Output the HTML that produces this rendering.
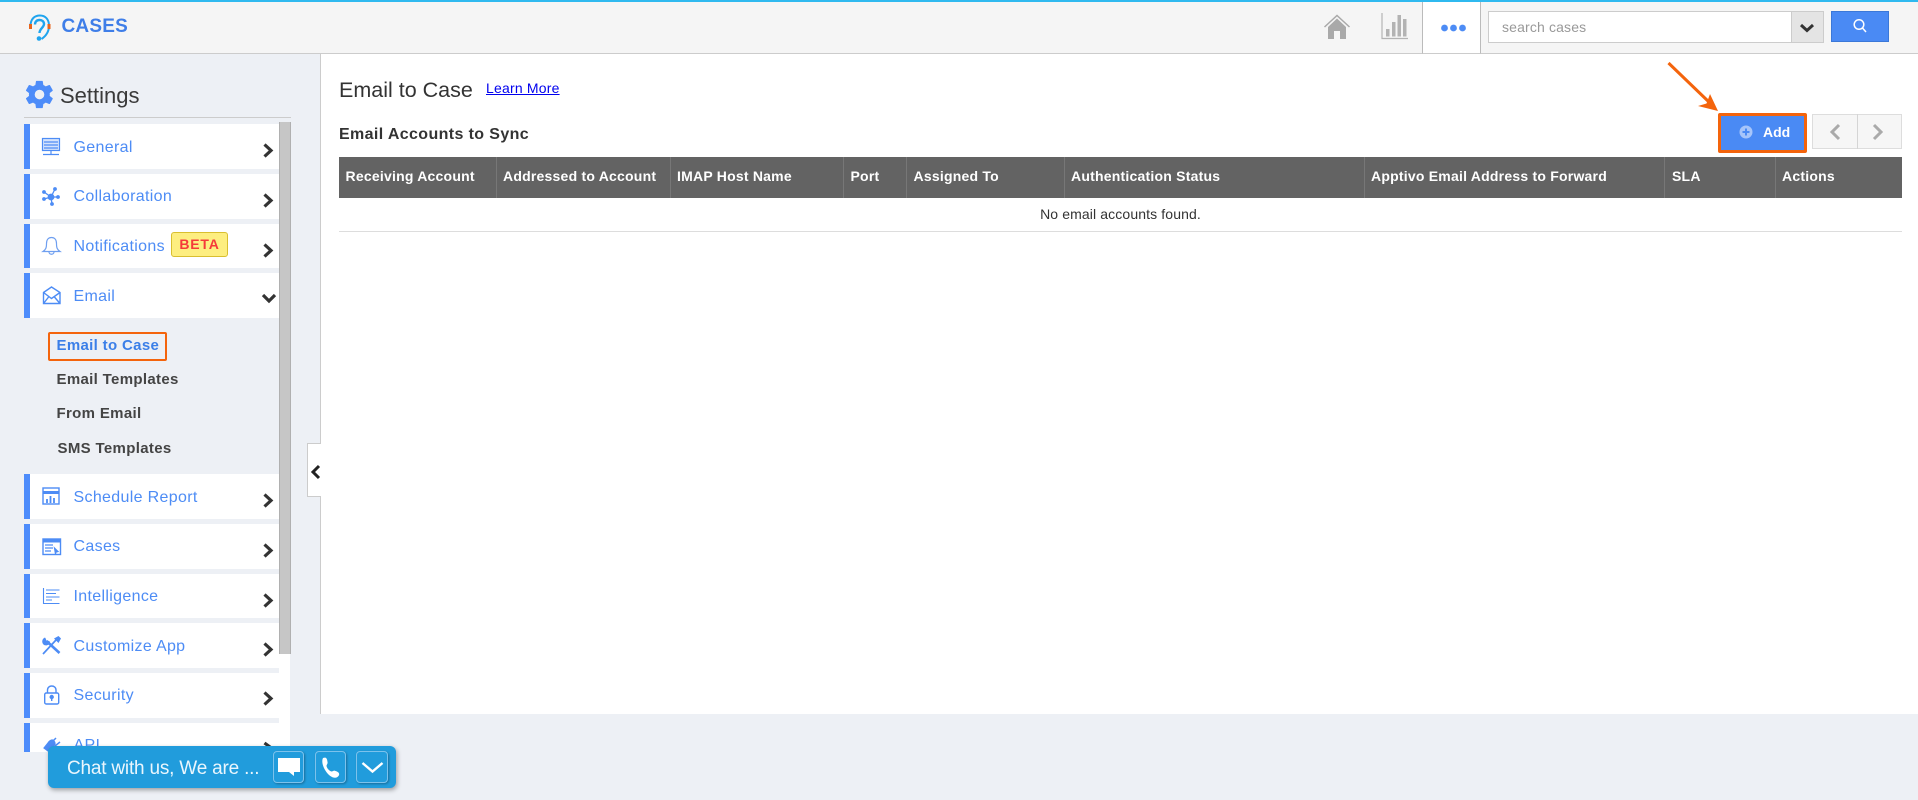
<!DOCTYPE html>
<html lang="en">
<head>
<meta charset="utf-8">
<title>Cases - Email to Case</title>
<style>
html,body{margin:0;padding:0;width:1918px;height:800px;overflow:hidden;background:#edf0f5;font-family:"Liberation Sans",Arial,sans-serif}
div,span,a,svg{position:absolute;display:block;box-sizing:border-box;white-space:nowrap}
.row{left:24px;width:255px;background:#fff;border-left:6px solid #4d8cfb}
.lb{left:43.500px;top:0;font-size:16px;line-height:45px;color:#4d8cf5;letter-spacing:.33px}
.ic{left:0;top:0;overflow:visible}
.sub{font-size:15px;font-weight:bold;color:#444;line-height:20px;letter-spacing:.33px}
.th{top:157px;height:38px;line-height:38px;color:#fff;font-size:14px;font-weight:bold;letter-spacing:.22px}
.sep{top:157px;width:1px;height:41px;background:#777}
</style>
</head>
<body>
<!-- header -->
<div style="left:0;top:0;width:1918px;height:54px;background:#f5f5f5;border-bottom:1px solid #ccc"></div>
<div style="left:0;top:0;width:1918px;height:2px;background:#2fb9ef"></div>
<svg style="left:26px;top:12px" width="26" height="32" viewBox="0 0 26 32" fill="none">
<path d="M4.500 14C4.500 7 8.500 3.500 14 3.500C19.500 3.500 23 7.500 23 13.500C23 20 20 24 15.500 27" stroke="#1fa4ee" stroke-width="2"/>
<path d="M9 12.500C9 9.500 11 8 13.500 8C16 8 18 9.500 18 12C18 15.500 13.500 16.500 13.500 21" stroke="#1fa4ee" stroke-width="2.400"/>
<circle cx="13" cy="26.500" r="2.300" fill="#1fa4ee"/>
<rect x="3" y="12" width="3" height="5" fill="#e8641b"/><rect x="21.500" y="12" width="3" height="5" fill="#e8641b"/>
</svg>
<div style="left:61.500px;top:16px;font-size:19px;font-weight:bold;color:#3f7ee8;line-height:22px;letter-spacing:.2px">CASES</div>

<svg style="left:1323px;top:14px" width="28" height="26" viewBox="0 0 28 26">
<path d="M1.500 13L14 1.500L26.500 13" fill="none" stroke="#a9a9a9" stroke-width="1.500"/>
<path d="M14 4.500L23 13V25H17V17H11V25H5V13Z" fill="#a9a9a9"/>
</svg>
<svg style="left:1381px;top:12px" width="28" height="28" viewBox="0 0 28 28">
<path d="M1 1V26.500H27" fill="none" stroke="#b3b3b3" stroke-width="1.200"/>
<rect x="5" y="17" width="3.500" height="7.500" fill="#b3b3b3"/><rect x="11" y="10" width="3.500" height="14.500" fill="#b3b3b3"/><rect x="16.500" y="3" width="3.500" height="21.500" fill="#b3b3b3"/><rect x="22" y="7" width="3.500" height="17.500" fill="#b3b3b3"/>
</svg>
<div style="left:1422px;top:2px;width:59px;height:52px;background:#fff;border-left:1px solid #bbb;border-right:1px solid #bbb;border-bottom:1px solid #ccc"></div>
<svg style="left:1439px;top:23px" width="28" height="10"><circle cx="5.500" cy="5" r="3.400" fill="#4d8cf5"/><circle cx="14.500" cy="5" r="3.400" fill="#4d8cf5"/><circle cx="23.500" cy="5" r="3.400" fill="#4d8cf5"/></svg>
<div style="left:1488px;top:11px;width:336px;height:32px;background:#fff;border:1px solid #ccc"></div>
<div style="left:1502px;top:11px;font-size:14px;line-height:32px;color:#999;letter-spacing:.15px">search cases</div>
<div style="left:1791px;top:12px;width:32px;height:30px;background:#e4e4e4;border-left:1px solid #ccc"></div>
<svg style="left:1799px;top:23px" width="16" height="10"><path d="M2 2L8 7.500L14 2" fill="none" stroke="#333" stroke-width="3"/></svg>
<div style="left:1831px;top:11px;width:58px;height:31px;background:#4a8af4;border:1px solid #3b78d8"></div>
<svg style="left:1852px;top:18px" width="16" height="16" fill="none" stroke="#fff" stroke-width="1.500"><circle cx="7" cy="6.500" r="4.800"/><path d="M10.500 10L14 14"/></svg>

<!-- content -->
<div style="left:320px;top:54px;width:1598px;height:660px;background:#fff;border-left:1px solid #ccc"></div>
<div style="left:339px;top:77px;font-size:21.500px;line-height:26px;color:#333">Email to Case</div>
<a style="left:486px;top:80px;font-size:14px;line-height:16px;color:#0000ee;text-decoration:underline;letter-spacing:.2px">Learn More</a>
<div style="left:339px;top:125px;font-size:16px;font-weight:bold;line-height:20px;color:#333;letter-spacing:.38px">Email Accounts to Sync</div>

<div style="left:339px;top:157px;width:1563px;height:41px;background:#636363"></div>
<div class="sep" style="left:496px"></div><div class="sep" style="left:670px"></div><div class="sep" style="left:843px"></div><div class="sep" style="left:906px"></div><div class="sep" style="left:1064px"></div><div class="sep" style="left:1364px"></div><div class="sep" style="left:1664px"></div><div class="sep" style="left:1775px"></div>
<div class="th" style="left:345.500px">Receiving Account</div>
<div class="th" style="left:503px">Addressed to Account</div>
<div class="th" style="left:677px">IMAP Host Name</div>
<div class="th" style="left:850.500px">Port</div>
<div class="th" style="left:913.500px">Assigned To</div>
<div class="th" style="left:1071px">Authentication Status</div>
<div class="th" style="left:1371px">Apptivo Email Address to Forward</div>
<div class="th" style="left:1672px">SLA</div>
<div class="th" style="left:1782px">Actions</div>
<div style="left:339px;top:198px;width:1563px;height:34px;border-bottom:1px solid #ddd;text-align:center;font-size:14px;line-height:32px;color:#333;letter-spacing:.12px">No email accounts found.</div>

<!-- add + pager -->
<div style="left:1718px;top:113px;width:89px;height:40px;background:#4a8af4;border:3px solid #f4640c;border-radius:2px"></div>
<svg style="left:1739px;top:125px" width="14" height="14"><circle cx="7" cy="7" r="6.500" fill="#a6c5fa"/><path d="M7 3.500V10.500M3.500 7H10.500" stroke="#4a8af4" stroke-width="2"/></svg>
<div style="left:1763px;top:122px;font-size:14px;font-weight:bold;line-height:20px;color:#fff">Add</div>
<div style="left:1812px;top:114px;width:90px;height:35px;background:#f6f6f6;border:1px solid #ddd"></div>
<div style="left:1857px;top:114px;width:1px;height:35px;background:#d5d5d5"></div>
<svg style="left:1828px;top:123px" width="14" height="18"><path d="M11 2L4 9L11 16" fill="none" stroke="#aaa" stroke-width="3"/></svg>
<svg style="left:1871px;top:123px" width="14" height="18"><path d="M3 2L10 9L3 16" fill="none" stroke="#aaa" stroke-width="3"/></svg>
<svg style="left:1660px;top:56px" width="62" height="60" fill="none"><path d="M8.500 7L50 47" stroke="#f4640c" stroke-width="3"/><path d="M58 55L50 38L46.500 47.500L38 50Z" fill="#f4640c"/></svg>

<!-- sidebar -->
<svg style="left:23px;top:78px" width="33" height="33" viewBox="0 0 24 24"><path fill="#4d8cf9" d="M19.400 13c.1-.3.100-.7.100-1s0-.7-.1-1l2.100-1.600c.2-.2.200-.4.100-.6l-2-3.500c-.1-.2-.4-.3-.6-.2l-2.500 1c-.5-.4-1.100-.7-1.700-1l-.4-2.600c0-.2-.2-.4-.5-.4h-4c-.3 0-.5.200-.5.400l-.4 2.600c-.6.300-1.200.6-1.700 1l-2.500-1c-.2-.1-.5 0-.6.200l-2 3.500c-.1.200-.1.400.1.600L4.400 11c-.1.300-.1.700-.1 1s0 .7.100 1l-2.100 1.600c-.2.200-.2.400-.1.600l2 3.500c.1.200.4.300.6.200l2.500-1c.5.400 1.100.7 1.700 1l.4 2.600c0 .2.200.4.500.4h4c.3 0 .5-.2.500-.4l.4-2.600c.6-.3 1.200-.6 1.700-1l2.500 1c.2.100.5 0 .6-.2l2-3.500c.1-.2.100-.4-.1-.6zM12 15.500a3.500 3.500 0 1 1 0-7 3.500 3.500 0 0 1 0 7z"/></svg>
<div style="left:60px;top:82px;font-size:22px;line-height:28px;color:#3a3a3a">Settings</div>
<div style="left:24px;top:117px;width:267px;height:1px;background:#ccc"></div>

<div style="left:24px;top:122px;width:267px;height:630px;overflow:hidden">
<div style="left:255px;top:0;width:12px;height:532px;background:#c6c6c6;border-left:1px solid #b0b0b0;border-right:1px solid #b0b0b0"></div>
<div style="left:255px;top:532px;width:11px;height:98px;background:#fff"></div>
</div>

<div class="row" style="top:124px;height:45px"><div class="lb" style="top:1px">General</div></div>
<div class="row" style="top:174px;height:45px"><div class="lb">Collaboration</div></div>
<div class="row" style="top:224px;height:44px"><div class="lb">Notifications</div></div>
<div class="row" style="top:273px;height:45px"><div class="lb" style="top:1px">Email</div></div>
<div class="row" style="top:474px;height:45px"><div class="lb" style="top:1px">Schedule Report</div></div>
<div class="row" style="top:524px;height:45px"><div class="lb">Cases</div></div>
<div class="row" style="top:574px;height:44px"><div class="lb">Intelligence</div></div>
<div class="row" style="top:623px;height:45px"><div class="lb" style="top:1px">Customize App</div></div>
<div class="row" style="top:673px;height:45px"><div class="lb">Security</div></div>
<div class="row" style="top:723px;height:29px"><div class="lb">API</div></div>

<div style="left:171px;top:232px;width:57px;height:25px;background:#fdee80;border:1px solid #d9bf2f;border-radius:3px;text-align:center;font-size:14px;font-weight:bold;letter-spacing:.8px;line-height:23px;color:#f53a3a">BETA</div>

<!-- sidebar icons -->
<svg class="ic" width="300" height="760" fill="none" stroke="#4d8cf5" stroke-width="1.200">
<rect x="42.500" y="138.500" width="17" height="12" fill="#d5e3fc"/><path d="M44 142H58M44 145H58M44 148H58M51 151V154M43 154.500H59"/>
<path d="M51 197L44 192M51 197L55 189M51 197L58 197M51 197L52 204M51 197L44 199" stroke-width="1.300"/><circle cx="51" cy="197" r="2.800" fill="#4d8cf5"/><circle cx="44" cy="192" r="1.300" fill="#4d8cf5"/><circle cx="44" cy="199" r="1.300" fill="#4d8cf5"/><circle cx="58" cy="197" r="1.300" fill="#4d8cf5"/><circle cx="55" cy="189" r="1.300" fill="#4d8cf5"/><circle cx="52" cy="204" r="1.300" fill="#4d8cf5"/>
<path d="M43 251.500C46 249.500 46.500 247.500 46.500 243.500C46.500 239.500 48.500 237.500 51.500 237.500C54.500 237.500 56.500 239.500 56.500 243.500C56.500 247.500 57 249.500 60 251.500ZM49 252C49 255 54 255 54 252" stroke="#6f9ff0"/>
<path d="M43.500 292.500L51.500 287L60 292.500V303.500H43.500ZM43.500 292.500L51.500 298.500L60 292.500M43.500 303.500L49 296.500M60 303.500L54 296.500" stroke-width="1.400"/>
<rect x="43" y="488" width="16" height="16" stroke-width="1.400"/><path d="M43 492.500H59" stroke-width="3"/><path d="M47 503V499M50.500 503V496M54 503V498" stroke-width="1.800"/>
<rect x="43" y="539" width="17.500" height="15.500" stroke-width="1.400"/><path d="M43 541H60.500" stroke-width="3"/><path d="M45 545H53M45 548H53M45 551H51"/><path d="M54.500 548L58 551.500L56 552L55.500 554Z" fill="#4d8cf5"/>
<path d="M43.500 588V603.500H59.500M46 590H59.500M46 593.500H56M46 597H59.500M46 600H52" stroke-width="1.100"/>
<path d="M46.500 641L59.500 653" stroke-width="2.600"/><path d="M45 637.500C41.500 639 41.500 643 44 645C46.500 646 50 645 50 642C49.500 640.500 47.500 641 46.500 640.500C46 640 46 638.500 45 637.500Z" fill="#4d8cf5" stroke="none"/><path d="M43 654L56 640" stroke-width="1.700"/><path d="M54 638.500L58.500 636L61 638.500L58.500 643Z" fill="#4d8cf5" stroke="none"/>
<rect x="44.700" y="693" width="14" height="11" rx="1.500" stroke-width="1.400"/><path d="M47.500 693V690C47.500 687.500 49.500 686 51.700 686C54 686 56 687.500 56 690V693" stroke-width="1.400"/><circle cx="51.700" cy="697" r="1.600" fill="#4d8cf5"/><path d="M51.700 697V701" stroke-width="1.400"/>
<path d="M44 748L48 743C50 740 53 739 54 741C56 743 55 745 53 747L48 751Z" fill="#4d8cf5"/><path d="M52 742L56 738M55 746L60 742" stroke-width="1.500"/>
</svg>

<!-- chevrons -->
<svg class="ic" width="300" height="760" fill="none" stroke="#333" stroke-width="3.200">
<path d="M264.500 144.500L271 150.500L264.500 156.500"/>
<path d="M264.500 194.500L271 200.500L264.500 206.500"/>
<path d="M264.500 244.500L271 250.500L264.500 256.500"/>
<path d="M263 295L269 301L275 295"/>
<path d="M264.500 494.500L271 500.500L264.500 506.500"/>
<path d="M264.500 544.500L271 550.500L264.500 556.500"/>
<path d="M264.500 594.500L271 600.500L264.500 606.500"/>
<path d="M264.500 643.500L271 649.500L264.500 655.500"/>
<path d="M264.500 692.500L271 698.500L264.500 704.500"/>
<path d="M264.500 743L270 747L264.500 751"/>
</svg>

<!-- submenu -->
<div style="left:48px;top:332px;width:119px;height:29px;border:2px solid #f4640c;border-radius:2px"></div>
<div class="sub" style="left:56.500px;top:336px;color:#3b7fe8">Email to Case</div>
<div class="sub" style="left:56.500px;top:370px">Email Templates</div>
<div class="sub" style="left:56.500px;top:404px">From Email</div>
<div class="sub" style="left:57.500px;top:439px">SMS Templates</div>

<!-- collapse -->
<div style="left:307px;top:443px;width:14px;height:54px;background:#fff;border:1px solid #ccc;border-right:0"></div>
<svg style="left:310px;top:464px" width="11" height="16"><path d="M9 2L3 8L9 14" fill="none" stroke="#222" stroke-width="3"/></svg>

<!-- chat -->
<div style="left:48px;top:746px;width:348px;height:42px;background:#219cdc;border-radius:6px;box-shadow:1px 2px 5px rgba(0,0,0,.35)"></div>
<div style="left:67px;top:746px;font-size:19px;line-height:46px;color:#eaf6fd;letter-spacing:-.2px">Chat with us, We are ...</div>
<div style="left:273px;top:751px;width:31px;height:32px;border:1px solid #7cc2ec;border-radius:4px;box-shadow:1px 1px 2px rgba(0,0,0,.3)"></div>
<div style="left:315px;top:751px;width:31px;height:32px;border:1px solid #7cc2ec;border-radius:4px;box-shadow:1px 1px 2px rgba(0,0,0,.3)"></div>
<div style="left:356px;top:751px;width:32px;height:32px;border:1px solid #7cc2ec;border-radius:4px;box-shadow:1px 1px 2px rgba(0,0,0,.3)"></div>
<svg style="left:278px;top:758px" width="22" height="20"><path d="M0 0H22V14H16V18L11 14H0Z" fill="#fff"/></svg>
<svg style="left:320px;top:756px" width="22" height="24"><path d="M3 2C6 1 7 2 7.500 6C8 8 6.500 8.500 6.500 10C7 12.500 9.500 15 11.500 15.500C13 15.500 14 14 15.500 15C19 16 20 18 18.500 20C16 23 12 22 8 18C3.500 13 1 6 3 2Z" fill="#fff"/></svg>
<svg style="left:361px;top:761px" width="23" height="14"><path d="M1.500 2L11.500 10.500L21.500 2" fill="none" stroke="#fff" stroke-width="2.400"/></svg>
</body>
</html>
